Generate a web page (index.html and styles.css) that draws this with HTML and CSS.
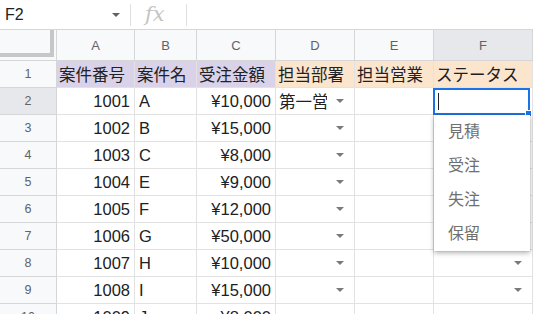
FILE: index.html
```html
<!DOCTYPE html>
<html lang="ja">
<head>
  <meta charset="UTF-8" />
  <meta name="viewport" content="width=device-width, initial-scale=1.0" />
  <link rel="stylesheet" href="styles.css">
</head>
<body>
  <div class="formula-bar">
    <div class="name-box"><span>F2</span><i class="caret"></i></div>
    <div class="fx">fx</div>
    <div class="formula-input"></div>
  </div>

  <div class="sheet">
    <div class="corner"><div class="freeze"></div></div>
    <div class="col-head">A</div>
    <div class="col-head">B</div>
    <div class="col-head">C</div>
    <div class="col-head">D</div>
    <div class="col-head">E</div>
    <div class="col-head active">F</div>

    <div class="row-head">1</div>
    <div class="cell purple">案件番号</div>
    <div class="cell purple">案件名</div>
    <div class="cell purple">受注金額</div>
    <div class="cell orange">担当部署</div>
    <div class="cell orange">担当営業</div>
    <div class="cell orange">ステータス</div>

    <div class="row-head active">2</div>
    <div class="cell num">1001</div>
    <div class="cell">A</div>
    <div class="cell num">¥10,000</div>
    <div class="cell select"><span>第一営業</span><i class="caret"></i></div>
    <div class="cell"></div>
    <div class="cell current">
      <div class="editor"><i class="cursor"></i></div>
      <div class="handle"></div>
      <ul class="dropdown">
        <li>見積</li>
        <li>受注</li>
        <li>失注</li>
        <li>保留</li>
      </ul>
    </div>

    <div class="row-head">3</div>
    <div class="cell num">1002</div>
    <div class="cell">B</div>
    <div class="cell num">¥15,000</div>
    <div class="cell select"><span></span><i class="caret"></i></div>
    <div class="cell"></div>
    <div class="cell select"><span></span><i class="caret"></i></div>

    <div class="row-head">4</div>
    <div class="cell num">1003</div>
    <div class="cell">C</div>
    <div class="cell num">¥8,000</div>
    <div class="cell select"><span></span><i class="caret"></i></div>
    <div class="cell"></div>
    <div class="cell select"><span></span><i class="caret"></i></div>

    <div class="row-head">5</div>
    <div class="cell num">1004</div>
    <div class="cell">E</div>
    <div class="cell num">¥9,000</div>
    <div class="cell select"><span></span><i class="caret"></i></div>
    <div class="cell"></div>
    <div class="cell select"><span></span><i class="caret"></i></div>

    <div class="row-head">6</div>
    <div class="cell num">1005</div>
    <div class="cell">F</div>
    <div class="cell num">¥12,000</div>
    <div class="cell select"><span></span><i class="caret"></i></div>
    <div class="cell"></div>
    <div class="cell select"><span></span><i class="caret"></i></div>

    <div class="row-head">7</div>
    <div class="cell num">1006</div>
    <div class="cell">G</div>
    <div class="cell num">¥50,000</div>
    <div class="cell select"><span></span><i class="caret"></i></div>
    <div class="cell"></div>
    <div class="cell select"><span></span><i class="caret"></i></div>

    <div class="row-head">8</div>
    <div class="cell num">1007</div>
    <div class="cell">H</div>
    <div class="cell num">¥10,000</div>
    <div class="cell select"><span></span><i class="caret"></i></div>
    <div class="cell"></div>
    <div class="cell select"><span></span><i class="caret"></i></div>

    <div class="row-head">9</div>
    <div class="cell num">1008</div>
    <div class="cell">I</div>
    <div class="cell num">¥15,000</div>
    <div class="cell select"><span></span><i class="caret"></i></div>
    <div class="cell"></div>
    <div class="cell select"><span></span><i class="caret"></i></div>

    <div class="row-head">10</div>
    <div class="cell num">1009</div>
    <div class="cell">J</div>
    <div class="cell num">¥8,000</div>
    <div class="cell select"><span></span><i class="caret"></i></div>
    <div class="cell"></div>
    <div class="cell select"><span></span><i class="caret"></i></div>
  </div>
</body>
</html>
```

FILE: styles.css
```css
:root {
  --grid-line: #e2e2e2;
  --head-bg: #f8f9fa;
  --head-line: #d6d6d6;
  --head-text: #5f6368;
  --active-head: #e6e8eb;
  --blue: #1a73e8;
}
html, body {
  height: 100%;
  overflow: hidden;
}
body {
  margin: 0;
  background: #ffffff;
  color: #202124;
  font-family: "Liberation Sans", "Noto Sans CJK JP", sans-serif;
}

/* 數式列 */
.formula-bar {
  display: flex;
  align-items: center;
  height: 30px;
  box-sizing: border-box;
  border-bottom: 1px solid var(--head-line);
}
.name-box {
  display: flex;
  align-items: center;
  justify-content: space-between;
  width: 131px;
  height: 22px;
  box-sizing: border-box;
  padding: 0 10px 0 5px;
  border-right: 1px solid #e0e0e0;
  font-size: 16px;
  color: #202124;
}
.name-box .caret {
  border-top-color: #5f6368;
}
.fx {
  width: 56px;
  height: 22px;
  box-sizing: border-box;
  padding-left: 14px;
  border-right: 1px solid #e0e0e0;
  font-family: "DejaVu Serif", "Liberation Serif", serif;
  font-style: italic;
  font-size: 21px;
  line-height: 20px;
  color: #c4c4c4;
}
.formula-input {
  flex: 1;
}

/* 工作表 */
.sheet {
  display: grid;
  grid-template-columns: 57px 78px 62px 79px 79px 79px 99px;
  grid-template-rows: 31px;
  grid-auto-rows: 27px;
}
.corner {
  background: var(--head-bg);
  border-right: 1px solid var(--head-line);
  border-bottom: 1px solid var(--head-line);
}
.freeze {
  width: 54px;
  height: 27px;
  box-sizing: border-box;
  border-right: 4px solid #c7c7c7;
  border-bottom: 4px solid #c7c7c7;
}
.col-head,
.row-head {
  display: flex;
  align-items: center;
  justify-content: center;
  background: var(--head-bg);
  color: var(--head-text);
  font-size: 13px;
  border-right: 1px solid var(--head-line);
  border-bottom: 1px solid var(--head-line);
}
.row-head {
  font-size: 12.5px;
}
.col-head.active,
.row-head.active {
  background: var(--active-head);
}

.cell {
  display: flex;
  align-items: center;
  min-width: 0;
  padding: 0 4px;
  font-size: 16.5px;
  white-space: nowrap;
  overflow: hidden;
  border-right: 1px solid var(--grid-line);
  border-bottom: 1px solid var(--grid-line);
}
.cell.num {
  justify-content: flex-end;
}
.cell.purple {
  background: #d9d2e9;
  padding: 0 2px;
}
.cell.orange {
  background: #fce5cd;
  padding: 0 2px;
}
.cell.select {
  padding-left: 3px;
}
.cell.select span {
  flex: 1;
  min-width: 0;
  overflow: hidden;
}
.cell.select .caret {
  margin: 0 6px 0 9px;
}

.caret {
  display: block;
  width: 0;
  height: 0;
  border-left: 4px solid transparent;
  border-right: 4px solid transparent;
  border-top: 4px solid #7a7a7a;
}

/* 目前儲存格與下拉選單 */
.cell.current {
  position: relative;
  overflow: visible;
  padding: 0;
}
.editor {
  position: absolute;
  top: 0;
  left: -1px;
  right: 2px;
  bottom: -1px;
  border: 2px solid var(--blue);
  background: #ffffff;
  z-index: 2;
}
.cursor {
  position: absolute;
  top: 3px;
  left: 3px;
  width: 1px;
  height: 17px;
  background: #202124;
}
.handle {
  position: absolute;
  right: 0;
  bottom: -3px;
  width: 5px;
  height: 5px;
  background: var(--blue);
  border: 1px solid #ffffff;
  z-index: 3;
}
.dropdown {
  position: absolute;
  top: 27px;
  left: 0;
  width: 96px;
  margin: 0;
  padding: 0;
  list-style: none;
  background: #ffffff;
  box-shadow: 0 2px 5px rgba(0, 0, 0, 0.3), 0 0 1px rgba(0, 0, 0, 0.25);
  z-index: 4;
}
.dropdown li {
  height: 34px;
  line-height: 34px;
  padding-left: 14px;
  font-size: 16px;
  color: #6f6f6f;
}
```
